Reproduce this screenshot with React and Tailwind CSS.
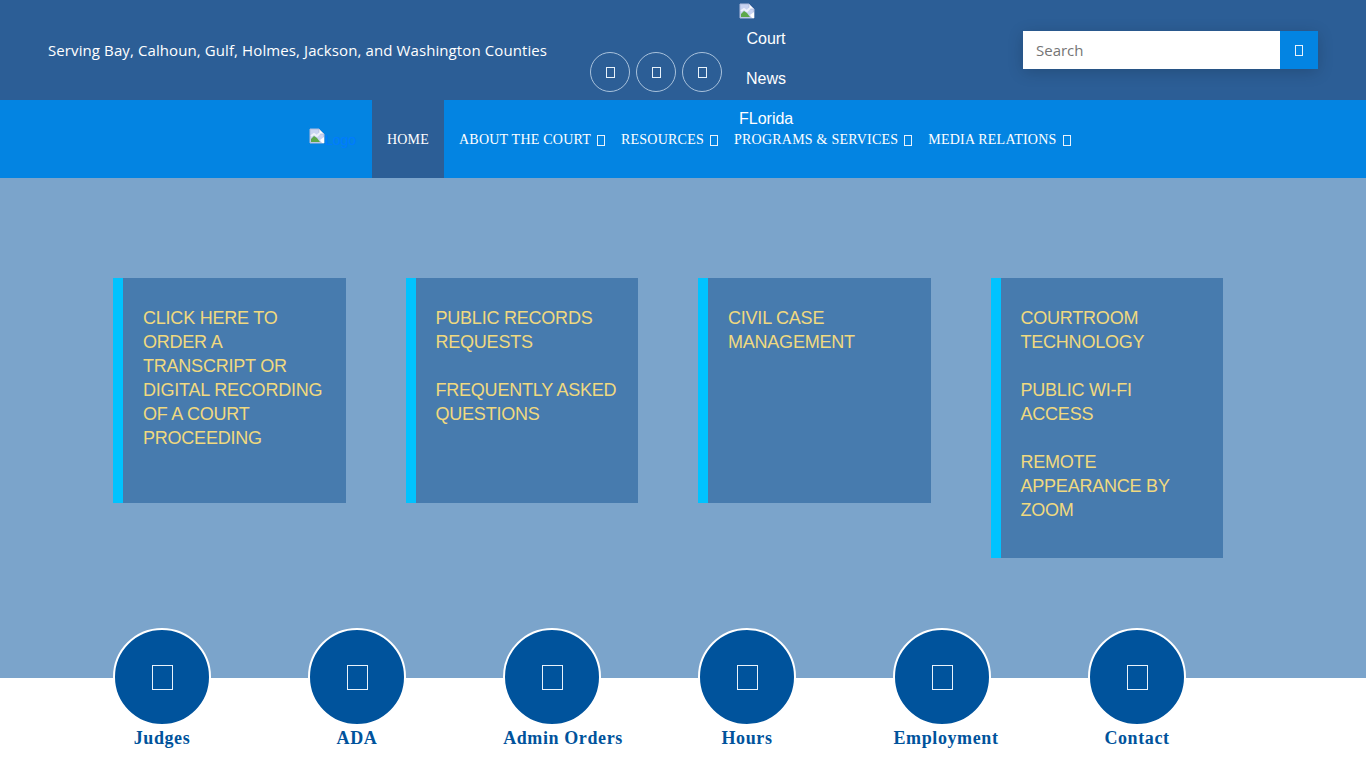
const Tofu = ({ className }) => <span className={"inline-block border border-[#e8f2fb] " + className} />;

const Broken = ({ className }) => (
  <svg viewBox="0 0 16 16" width="16" height="16" className={className}>
    <path d="M1 1h9l5 5v9H1z" fill="#c9d4f2" stroke="#aebbdc" strokeWidth="1" />
    <path d="M10 1v5h5z" fill="#ffffff" stroke="#aebbdc" strokeWidth="0.8" />
    <path d="M2 14v-3l3-3 3 2 3 4z" fill="#5da84a" />
    <path d="M2 8l3-2 3 2 3-3" fill="none" stroke="#eef2fb" strokeWidth="2" />
    <path d="M15 9l-4 3 2 3h2z" fill="#ffffff" />
  </svg>
);

const NavItem = ({ label, caret, className }) => (
  <div className={"flex items-center h-full whitespace-nowrap tracking-[0.23px] " + className}>
    <span>{label}</span>
    {caret && <Tofu className="w-[8px] h-[11px] ml-[6px] mt-[3px]" />}
  </div>
);

const Card = ({ paragraphs, tall }) => (
  <div className={"border-l-[10px] border-[#00c3ff] bg-[#477bae] pl-5 pr-5 pt-[28px] flex flex-col gap-6 " + (tall ? "h-[280px]" : "h-[225px]")}>
    {paragraphs.map((p) => (
      <p key={p} className="text-[18px] leading-6 text-[#f0d97f] tracking-[-0.22px]">{p}</p>
    ))}
  </div>
);

const links = [
  ["Judges", ""],
  ["ADA", ""],
  ["Admin Orders", "ml-[22px]"],
  ["Hours", ""],
  ["Employment", "ml-[8px]"],
  ["Contact", ""],
];

export default function App() {
  return (
    <div className="h-[768px] overflow-hidden bg-white font-['Liberation_Sans',sans-serif]">
      <header className="relative z-10 h-[100px] bg-[#2c5e96] flex text-white">
        <div className="w-[590px] shrink-0 pl-12 pt-[39px] font-['Open_Sans',sans-serif] text-[15px] leading-[22px] tracking-[0.1px] whitespace-nowrap">
          Serving Bay, Calhoun, Gulf, Holmes, Jackson, and Washington Counties
        </div>
        <div className="w-[149px] shrink-0 flex gap-[6px] pt-[52px]">
          {[0, 1, 2].map((i) => (
            <div key={i} className="w-10 h-10 rounded-full border border-[#a9c2dc] flex items-center justify-center">
              <Tofu className="w-[9px] h-[11px]" />
            </div>
          ))}
        </div>
        <div className="w-[54px] shrink-0 h-[100px] text-base text-center">
          <Broken className="mt-[3px]" />
          <div className="h-10 leading-[40px]">Court</div>
          <div className="h-10 leading-10">News</div>
          <div className="h-10 leading-10">FLorida</div>
        </div>
        <div className="ml-[230px] mt-[31px] w-[295px] h-[38px] flex shadow-[0_3px_16px_rgba(0,0,0,0.18)]">
          <div className="w-[257px] bg-white pl-[13px] flex items-center font-['Open_Sans',sans-serif] text-[15px] text-[#757575]">Search</div>
          <div className="w-[38px] bg-[#0384e2] flex items-center justify-center">
            <Tofu className="w-[8px] h-[11px]" />
          </div>
        </div>
      </header>

      <nav className="h-[78px] bg-[#0384e2] flex pl-[309px] font-['Liberation_Serif',serif] text-[14px] text-white">
        <div className="w-[63px] shrink-0 pt-[28px] flex items-start">
          <Broken />
          <span className="font-['Liberation_Sans',sans-serif] text-[14px] leading-6 text-[#007bff]">Logo</span>
        </div>
        <NavItem label="HOME" className="w-[72px] justify-center bg-[#2c5e96]" />
        <NavItem label="ABOUT THE COURT" caret className="ml-[15px]" />
        <NavItem label="RESOURCES" caret className="ml-[16px]" />
        <NavItem label="PROGRAMS & SERVICES" caret className="ml-[16px]" />
        <NavItem label="MEDIA RELATIONS" caret className="ml-[16px]" />
      </nav>

      <main className="h-[500px] bg-[#7ba4cb] pt-[100px]">
        <div className="ml-[113px] w-[1110px] grid grid-cols-4 gap-[60px] items-start">
          <Card paragraphs={["CLICK HERE TO ORDER A TRANSCRIPT OR DIGITAL RECORDING OF A COURT PROCEEDING"]} />
          <Card paragraphs={["PUBLIC RECORDS REQUESTS", "FREQUENTLY ASKED QUESTIONS"]} />
          <Card paragraphs={["CIVIL CASE MANAGEMENT"]} />
          <Card tall paragraphs={["COURTROOM TECHNOLOGY", "PUBLIC WI-FI ACCESS", "REMOTE APPEARANCE BY ZOOM"]} />
        </div>
      </main>

      <section className="relative -mt-[50px] pl-[113px] flex gap-[97px]">
        {links.map(([label, offset]) => (
          <div key={label} className="w-[98px] flex flex-col items-center">
            <div className="w-[98px] h-[98px] rounded-full bg-[#00539c] border-2 border-white flex items-center justify-center">
              <Tofu className="w-[21px] h-[25px]" />
            </div>
            <div className={"whitespace-nowrap font-['Liberation_Serif',serif] font-bold text-[18px] leading-6 tracking-[0.6px] text-[#00539c] " + offset}>{label}</div>
          </div>
        ))}
      </section>
    </div>
  );
}
